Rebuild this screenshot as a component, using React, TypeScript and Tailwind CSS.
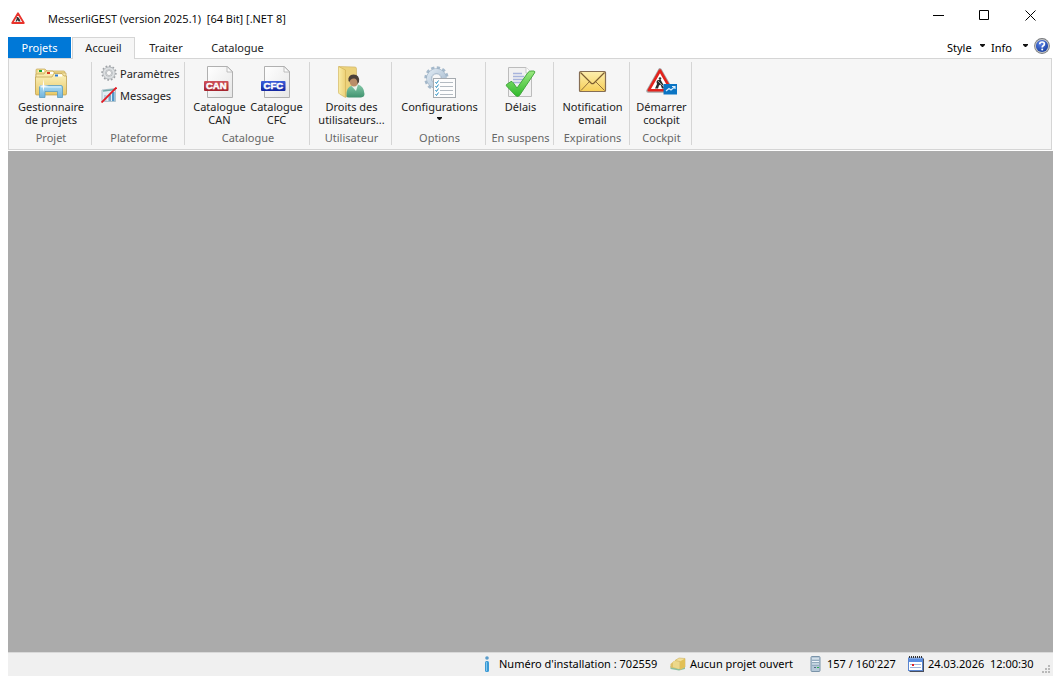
import React from "react"

type IconProps = { className?: string }

function Logo({ className }: IconProps) {
  return (
    <svg className={className} viewBox="0 0 14 12" aria-hidden="true">
      <path d="M7 1.2 12.8 11H1.2Z" fill="#fff" stroke="#e8332c" strokeWidth="1.8" strokeLinejoin="round" />
      <path d="M5.5 5 7 5 8.6 7 9.6 9.6H7.6L6.6 8 6 9.6H4.4L5.6 7Z" fill="#333" />
    </svg>
  )
}

function ProjectsIcon() {
  return (
    <svg className="size-8" viewBox="0 0 32 32" aria-hidden="true">
      <defs>
        <linearGradient id="folder" x1="0" y1="0" x2="0" y2="1">
          <stop offset="0" stopColor="#fbf3c0" />
          <stop offset="1" stopColor="#e9c866" />
        </linearGradient>
        <linearGradient id="stand" x1="0" y1="0" x2="0" y2="1">
          <stop offset="0" stopColor="#a9dbf3" />
          <stop offset="1" stopColor="#74b4dc" />
        </linearGradient>
      </defs>
      <path d="M1 4Q1 3 2 3H10L12 5H29Q30 5 30 7V26H1Z" fill="#f1dc8e" stroke="#c3a65a" strokeWidth=".7" />
      <path d="M3.500 4H9V6H3.500Z" fill="#fff" />
      <rect x="4" y="4" width="3" height="2" fill="#1fa53a" />
      <path d="M1 8H9L11 5H18L20 7H31V26H1Z" fill="#f7e9ac" stroke="#c3a65a" strokeWidth=".7" />
      <path d="M12 6H18V8H12Z" fill="#fff" />
      <rect x="12" y="6" width="3" height="2" fill="#d93a22" />
      <path d="M.500 11H17L19 7.500H27L29 10H31.500V28Q31.500 29 30 29H2Q.5 29 .5 28Z" fill="url(#folder)" stroke="#bd9d4c" strokeWidth=".7" />
      <rect x="20" y="8.500" width="7" height="2" fill="#fff" />
      <rect x="20" y="8.500" width="3" height="2" fill="#2a78cf" />
      <path d="M4.500 31.500V21Q4.500 19.500 6 19.500H26Q27.500 19.500 27.500 21V31.500H22.500V25.500H10V31.500Z" fill="url(#stand)" stroke="#5a9cc0" strokeWidth=".8" />
      <path d="M6 21H26" stroke="#def4ff" strokeWidth="1" />
      <path d="M8.500 13 9.200 19.300 14 20 9.200 20.700 8.500 26 7.800 20.700 3 20 7.800 19.300Z" fill="#fff" />
    </svg>
  )
}

function GearIcon() {
  return (
    <svg className="size-4" viewBox="0 0 16 16" aria-hidden="true">
      <circle cx="8" cy="8" r="6.900" fill="none" stroke="#9fa3a7" strokeWidth="1.600" strokeDasharray="1.700 1.900" />
      <circle cx="8" cy="8" r="4.700" fill="none" stroke="#a8acb0" strokeWidth="3.400" />
      <circle cx="8" cy="8" r="4.700" fill="none" stroke="#dcdfe1" strokeWidth="2.300" />
      <circle cx="8" cy="8" r="2.600" fill="#f7f7f7" stroke="#989da2" strokeWidth=".6" />
    </svg>
  )
}

function MessagesIcon() {
  return (
    <svg className="size-4" viewBox="0 0 16 16" aria-hidden="true">
      <path d="M1 3 14.500 1.500V14.500H1Z" fill="#e0edf4" stroke="#9fb6c4" strokeWidth=".8" />
      <path d="M2 4 14 2.500" stroke="#6fa9a8" strokeWidth="1.500" />
      <rect x="3" y="8" width="2.500" height="6" fill="#b5cddc" />
      <rect x="7.500" y="8" width="2.500" height="6" fill="#7ba6c8" />
      <rect x="11" y="5" width="2.500" height="9" fill="#5297c8" />
      <path d="M.5 15.500 15.500 .5" stroke="#e31b23" strokeWidth="1.900" />
    </svg>
  )
}

function CatalogIcon({ label, color, dark }: { label: string; color: string; dark: string }) {
  return (
    <svg className="size-8" viewBox="0 0 32 32" aria-hidden="true">
      <defs>
        <linearGradient id={"page" + label} x1="0" y1="0" x2="1" y2="1">
          <stop offset="0" stopColor="#ffffff" />
          <stop offset="1" stopColor="#e6e6e6" />
        </linearGradient>
        <linearGradient id={"band" + label} x1="0" y1="0" x2="0" y2="1">
          <stop offset="0" stopColor={color} />
          <stop offset="1" stopColor={dark} />
        </linearGradient>
      </defs>
      <path d="M3.500 .5H23.500L28.500 5.500V31.500H3.500Z" fill={"url(#page" + label + ")"} stroke="#b0b0b0" />
      <path d="M23 .5V6H28.500Z" fill="#fafafa" stroke="#b0b0b0" strokeWidth=".8" />
      <rect x="0" y="15" width="24.500" height="10" rx="1" fill={"url(#band" + label + ")"} />
      <text x="12.300" y="23.400" textAnchor="middle" fontFamily="Liberation Sans, sans-serif" fontSize="9.500" fontWeight="bold" fill="#fff" stroke="#fff" strokeWidth=".5">{label}</text>
    </svg>
  )
}

function UserRightsIcon() {
  return (
    <svg className="size-8" viewBox="0 0 32 32" aria-hidden="true">
      <defs>
        <linearGradient id="openFolder" x1="0" y1="0" x2="1" y2="0">
          <stop offset="0" stopColor="#faeda6" />
          <stop offset="1" stopColor="#ecd077" />
        </linearGradient>
        <linearGradient id="shirt" x1="0" y1="0" x2="0" y2="1">
          <stop offset="0" stopColor="#86c9a9" />
          <stop offset="1" stopColor="#40936f" />
        </linearGradient>
      </defs>
      <path d="M3 .5 19 1Q20.500 1 20.500 3V27L10 31Z" fill="#ecd27c" stroke="#cdb061" strokeWidth=".6" />
      <path d="M2.500 .5 9.500 4V31.500L3.500 28Q2.500 27.500 2.500 26Z" fill="url(#openFolder)" stroke="#cfae51" strokeWidth=".6" />
      <path d="M10.500 30Q10 21 16 19.500L22 18.500Q28 20 28.500 28Q28.500 31 25 31.500H13Q10.500 31.500 10.500 30Z" fill="url(#shirt)" />
      <path d="M15.500 20 20 25 22 18.500Z" fill="#e8f2ec" />
      <ellipse cx="18" cy="15" rx="4.500" ry="5.500" fill="#b98d68" />
      <path d="M12.500 15Q11.500 9 17.500 8.500Q24 8.500 23 16L21.500 18Q21.500 13 18.500 12.500Q14.500 12 13.500 16Z" fill="#4b4038" />
    </svg>
  )
}

function ConfigIcon() {
  return (
    <svg className="size-8" viewBox="0 0 32 32" aria-hidden="true">
      <defs>
        <linearGradient id="bigGear" x1="0" y1="0" x2="1" y2="1">
          <stop offset="0" stopColor="#dce7f1" />
          <stop offset="1" stopColor="#a9bdd0" />
        </linearGradient>
      </defs>
      <circle cx="12.500" cy="12.500" r="10.700" fill="none" stroke="#a5b9cb" strokeWidth="3" strokeDasharray="3.200 2.400" />
      <circle cx="12.500" cy="12.500" r="7.500" fill="none" stroke="#9cb1c4" strokeWidth="5.400" />
      <circle cx="12.500" cy="12.500" r="7.500" fill="none" stroke="url(#bigGear)" strokeWidth="4.400" />
      <circle cx="12.500" cy="12.500" r="4.600" fill="#f7f7f7" stroke="#a3b6c8" strokeWidth=".7" />
      <rect x="9.500" y="12.500" width="22" height="19" fill="#fdfdfd" stroke="#a5aaaf" />
      <path d="M16 16.500H29M16 20.500H29M16 24.500H29M16 28.500H29" stroke="#b4bbc2" />
      <path d="M11.500 16 12.500 17.500 14.500 14.500M11.500 20 12.500 21.500 14.500 18.500M11.500 24 12.500 25.500 14.500 22.500M11.500 28 12.500 29.500 14.500 26.500" fill="none" stroke="#2b8fc0" />
    </svg>
  )
}

function DeadlineIcon() {
  return (
    <svg className="size-8" viewBox="0 0 32 32" aria-hidden="true">
      <defs>
        <linearGradient id="check" x1="0" y1="0" x2="0" y2="1">
          <stop offset="0" stopColor="#9be880" />
          <stop offset="1" stopColor="#2fb92b" />
        </linearGradient>
      </defs>
      <path d="M3.500 1.500H21L26.500 7V30.500H3.500Z" fill="#f1f1f1" stroke="#bcbcbc" />
      <path d="M21 1.500V7H26.500" fill="#fff" stroke="#c8c8c8" />
      <path d="M8 7.500H17M8 10.500H19M8 13.500H19M8 16.500H19" stroke="#a7b4dc" strokeWidth="1.300" />
      <path d="M1.500 18.500 6 15.500Q7 15 8 16.500L12 22 23 6.500Q24 5 26 5H29Q30.500 5.500 29.500 7L14.500 29.500Q12.500 31.500 10.500 29.500L1.500 20Q1 19 1.500 18.500Z" fill="url(#check)" stroke="#3ca238" strokeWidth=".9" />
    </svg>
  )
}

function MailIcon() {
  return (
    <svg className="size-8" viewBox="0 0 32 32" aria-hidden="true">
      <defs>
        <linearGradient id="mail" x1="0" y1="0" x2="0" y2="1">
          <stop offset="0" stopColor="#fdeeae" />
          <stop offset="1" stopColor="#f7cf58" />
        </linearGradient>
      </defs>
      <rect x="2.500" y="5.500" width="26" height="20" rx="1" fill="url(#mail)" stroke="#866e55" strokeWidth="1.200" />
      <path d="M4 24.500 12.500 15.500M27.500 24.500 18.500 15.500" stroke="#94713c" strokeWidth="1" />
      <path d="M3.500 6.500 14 17Q15.500 18.500 17 17L27.500 6.500" fill="none" stroke="#7d5d30" strokeWidth="1.200" />
    </svg>
  )
}

function CockpitIcon() {
  return (
    <svg className="size-8" viewBox="0 0 32 32" aria-hidden="true">
      <path d="M14 4 26 25H2Z" fill="#fff" stroke="#a5a5a5" strokeWidth="3.600" strokeLinejoin="round" />
      <path d="M14 4.500 25.300 24.300H2.700Z" fill="#fff" stroke="#e3221c" strokeWidth="2.600" strokeLinejoin="round" />
      <circle cx="14" cy="12.500" r="1.300" fill="#333" />
      <path d="M11 14.500 14.500 13.500 17 18 18 22.500H16L14.500 18.500 13 19.500 12 22.500H9L11 18 10.500 16Z" fill="#2b2b2b" />
      <path d="M12 15 18 21" stroke="#bbb" strokeWidth=".8" />
      <rect x="17.500" y="18" width="13.500" height="10.500" fill="#0b75c4" />
      <path d="M20 25 23 22.500 25 24 28.500 21M26 20.500H29V23" fill="none" stroke="#d7edff" strokeWidth="1.200" />
    </svg>
  )
}

function HelpIcon() {
  return (
    <svg className="size-4" viewBox="0 0 16 16" aria-hidden="true">
      <defs>
        <radialGradient id="help" cx=".4" cy=".3" r=".8">
          <stop offset="0" stopColor="#5b83e6" />
          <stop offset="1" stopColor="#123a9c" />
        </radialGradient>
      </defs>
      <circle cx="8" cy="8" r="7.900" fill="#77797c" />
      <circle cx="8" cy="8" r="7.100" fill="#c3c5c8" />
      <circle cx="8" cy="8" r="6.100" fill="url(#help)" />
      <path d="M5.700 6.300Q5.700 4 8.100 4Q10.400 4 10.400 5.900Q10.400 7 9.200 7.700Q8.200 8.300 8.200 9.400" fill="none" stroke="#fff" strokeWidth="1.700" />
      <circle cx="8.200" cy="11.500" r="1" fill="#fff" />
    </svg>
  )
}

function InfoIcon() {
  return (
    <svg className="size-4" viewBox="0 0 16 16" aria-hidden="true">
      <circle cx="8" cy="2" r="1.800" fill="#5b9dcb" />
      <rect x="6" y="5" width="4" height="11" rx="1.500" fill="#3c9bd6" />
      <path d="M7.500 6V15" stroke="#83c8ee" />
    </svg>
  )
}

function FoldersIcon() {
  return (
    <svg className="size-4" viewBox="0 0 16 16" aria-hidden="true">
      <path d="M.5 10 9 12 15 10V13L9 14.500 .5 13Z" fill="#8cc0a0" />
      <path d="M.5 8 4 5 9 6V13L.5 11.500Z" fill="#dcc06a" />
      <path d="M3 6 7 3 12 4V12L9 13 3 11Z" fill="#ecd88a" />
      <path d="M5 4.500 9 2 15 2.500V11L10 13.500V5.500Z" fill="#f2e09a" stroke="#cdb061" strokeWidth=".6" />
      <path d="M10 5.500 15 2.500V11L10 13.500Z" fill="#e2c055" />
    </svg>
  )
}

function ServerIcon() {
  return (
    <svg className="size-4" viewBox="0 0 16 16" aria-hidden="true">
      <rect x="4" y=".5" width="9" height="15" rx="1" fill="#b5c8d8" stroke="#7a93a8" />
      <path d="M5 3H12M5 5.500H12M5 8H12" stroke="#f0f6fa" />
      <path d="M5 4.200H12M5 6.700H12M5 9.200H12" stroke="#7590a6" strokeWidth=".7" />
      <rect x="10" y="11" width="2" height="1" fill="#27b04a" />
      <rect x="7" y="11" width="2" height="1" fill="#4d6880" />
    </svg>
  )
}

function CalendarIcon() {
  return (
    <svg className="size-4" viewBox="0 0 16 16" aria-hidden="true">
      <rect x="1.500" y="2.500" width="14.500" height="13.500" fill="#4a4f5c" />
      <rect x=".5" y="2" width="14" height="12.500" fill="#fff" stroke="#5b86d0" />
      <rect x="1" y="2.500" width="13" height="3.500" fill="#5b8ee0" />
      <path d="M1 1H15" stroke="#333" strokeWidth="2" strokeDasharray="1 1" />
      <path d="M2 8.500H13M2 11.500H13" stroke="#9fb4da" />
      <rect x="4" y="8" width="2" height="2" fill="#e01f26" />
    </svg>
  )
}

function Caret() {
  return (
    <svg className="h-[3px] w-[5px]" viewBox="0 0 5 3" aria-hidden="true">
      <path d="M0 0H5V1L3 3H2L0 1Z" fill="#111" />
    </svg>
  )
}

function Group({ title, width, children }: { title: string; width: string; children: React.ReactNode }) {
  return (
    <section className={"flex shrink-0 flex-col border-r border-[#d5d5d5] pl-0.5 " + width}>
      <div className="flex h-[69px] justify-center">{children}</div>
      <h2 className="text-center text-[#666]">{title}</h2>
    </section>
  )
}

function BigButton({ icon, lines, menu }: { icon: React.ReactNode; lines: string[]; menu?: boolean }) {
  return (
    <button className="flex w-[57px] shrink-0 flex-col items-center justify-start whitespace-nowrap pt-1">
      {icon}
      <span className="mt-0.5">
        {lines.map((line) => (
          <span key={line} className="block">{line}</span>
        ))}
      </span>
      {menu && <span className="pt-1"><Caret /></span>}
    </button>
  )
}

function SmallButton({ icon, label }: { icon: React.ReactNode; label: string }) {
  return (
    <button className="flex h-[22px] items-center gap-[3px]">
      {icon}
      {label}
    </button>
  )
}

function StatusItem({ icon, width, children }: { icon: React.ReactNode; width: string; children: React.ReactNode }) {
  return (
    <div className={"flex shrink-0 items-center gap-1 whitespace-pre " + width}>
      {icon}
      <span>{children}</span>
    </div>
  )
}

export default function App() {
  return (
    <div className="flex h-screen flex-col bg-white px-2 pb-2 font-['Noto_Sans','Open_Sans',sans-serif] text-[11px] leading-[13px] text-[#222]">
      <header className="flex h-[37px] shrink-0 items-start">
        <Logo className="ml-[3px] mt-3 h-3 w-3.5" />
        <h1 className="ml-[23px] mt-3 flex-1 whitespace-pre font-['Open_Sans',sans-serif] text-black">{"MesserliGEST (version 2025.1)  [64 Bit] [.NET 8]"}</h1>
        <div className="flex">
          <button aria-label="Réduire" className="flex h-[30px] w-[46px] items-center justify-center">
            <svg className="size-[11px]" viewBox="0 0 11 11"><path d="M0 5.500H11" stroke="#000" /></svg>
          </button>
          <button aria-label="Agrandir" className="flex h-[30px] w-[46px] items-center justify-center">
            <svg className="size-[11px]" viewBox="0 0 11 11"><path d="M.5 .5H9.500V9.500H.5Z" fill="none" stroke="#000" /></svg>
          </button>
          <button aria-label="Fermer" className="flex h-[30px] w-[46px] items-center justify-center">
            <svg className="size-[11px]" viewBox="0 0 11 11"><path d="M.5 .5 10.500 10.500M10.500 .5 .5 10.500" stroke="#000" /></svg>
          </button>
        </div>
      </header>

      <nav className="flex h-[21px] shrink-0">
        <button className="mr-px w-[63px] bg-[#0078d7] text-white">Projets</button>
        <button className="z-10 -mb-px w-[63px] border border-b-0 border-[#d5d5d5] bg-[#f6f6f6] pb-0.5">Accueil</button>
        <button className="w-[62px]">Traiter</button>
        <button className="w-[81px]">Catalogue</button>
        <div className="ml-auto flex items-center pr-[3px] text-black">
          <button className="flex w-11 items-center justify-between">Style <span className="pb-1 pr-1.5"><Caret /></span></button>
          <button className="flex w-[43px] items-center justify-between">Info <span className="pb-1 pr-1.5"><Caret /></span></button>
          <button aria-label="Aide" className="pb-1"><HelpIcon /></button>
        </div>
      </nav>

      <div className="mb-px mr-px flex h-[92px] shrink-0 overflow-hidden border border-[#d5d5d5] bg-[#f6f6f6] pb-1 pt-[3px]">
        <Group title="Projet" width="w-[83px]">
          <BigButton icon={<ProjectsIcon />} lines={["Gestionnaire", "de projets"]} />
        </Group>
        <Group title="Plateforme" width="w-[93px]">
          <div className="w-[76px]">
            <SmallButton icon={<GearIcon />} label="Paramètres" />
            <SmallButton icon={<MessagesIcon />} label="Messages" />
          </div>
        </Group>
        <Group title="Catalogue" width="w-[125px]">
          <BigButton icon={<CatalogIcon label="CAN" color="#d0525a" dark="#a3222c" />} lines={["Catalogue", "CAN"]} />
          <BigButton icon={<CatalogIcon label="CFC" color="#3c5fdc" dark="#1326a0" />} lines={["Catalogue", "CFC"]} />
        </Group>
        <Group title="Utilisateur" width="w-[82px]">
          <BigButton icon={<UserRightsIcon />} lines={["Droits des", "utilisateurs..."]} />
        </Group>
        <Group title="Options" width="w-[94px]">
          <BigButton icon={<ConfigIcon />} lines={["Configurations"]} menu />
        </Group>
        <Group title="En suspens" width="w-[68px]">
          <BigButton icon={<DeadlineIcon />} lines={["Délais"]} />
        </Group>
        <Group title="Expirations" width="w-[76px]">
          <BigButton icon={<MailIcon />} lines={["Notification", "email"]} />
        </Group>
        <Group title="Cockpit" width="w-[62px]">
          <BigButton icon={<CockpitIcon />} lines={["Démarrer", "cockpit"]} />
        </Group>
      </div>

      <main className="min-h-0 flex-1 bg-[#ababab]" />

      <footer className="flex h-6 shrink-0 items-center justify-end border-t border-[#d9d9d9] bg-[#f0f0f0] pb-0.5 text-black">
        <StatusItem icon={<InfoIcon />} width="w-[191px]">Numéro d'installation : 702559</StatusItem>
        <StatusItem icon={<FoldersIcon />} width="w-[137px]">Aucun projet ouvert</StatusItem>
        <StatusItem icon={<ServerIcon />} width="w-[101px]">157 / 160'227</StatusItem>
        <StatusItem icon={<CalendarIcon />} width="w-[130px]">{"24.03.2026  12:00:30"}</StatusItem>
        <svg className="mr-0.5 ml-1 size-[9px] self-end" viewBox="0 0 9 9" aria-hidden="true">
          <path d="M6 0H8V2H6ZM3 3H5V5H3ZM6 3H8V5H6ZM0 6H2V8H0ZM3 6H5V8H3ZM6 6H8V8H6Z" fill="#b9b9b9" />
        </svg>
      </footer>
    </div>
  )
}
